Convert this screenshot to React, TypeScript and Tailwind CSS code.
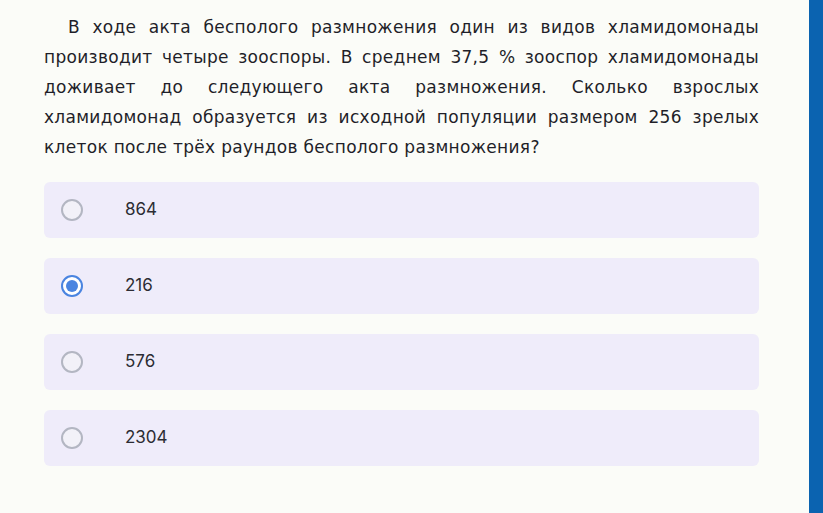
const options = [
  { id: 1, label: '864' },
  { id: 2, label: '216' },
  { id: 3, label: '576' },
  { id: 4, label: '2304' },
];

export default function App() {
  const selected = 2;
  return (
    <div className="flex h-[513px] w-[823px] bg-[#fbfcf8]">
      <div className="w-[809px] pl-[44px] pr-[50px] pt-[12px]">
        <p
          className="indent-[24px] text-justify text-[17px] leading-[30px] tracking-[0.3px] text-[#1f1f29]"
          style={{ fontFamily: '"DejaVu Sans", sans-serif' }}
        >
          В ходе акта бесполого размножения один из видов хламидомонады производит четыре зооспоры. В среднем 37,5 % зооспор хламидомонады доживает до следующего акта размножения. Сколько взрослых хламидомонад образуется из исходной популяции размером 256 зрелых клеток после трёх раундов бесполого размножения?
        </p>
        <div className="mt-[20px] flex flex-col gap-[20px]">
          {options.map((o) => (
            <div
              key={o.id}
              className="flex h-[56px] items-center rounded-[6px] bg-[#efecfa]"
            >
              <div className="ml-[17px] flex w-[22px] h-[22px] items-center justify-center">
                {selected === o.id ? (
                  <span className="flex h-[22px] w-[22px] items-center justify-center rounded-full border-2 border-[#4a84e0] bg-white">
                    <span className="h-[12px] w-[12px] rounded-full bg-[#4a84e0]" />
                  </span>
                ) : (
                  <span className="h-[22px] w-[22px] rounded-full border-2 border-[#b3b6c2] bg-[#f2f1f8]" />
                )}
              </div>
              <span
                className="ml-[42px] text-[17px] text-[#2c2c33]"
                style={{ fontFamily: 'Inter, sans-serif' }}
              >
                {o.label}
              </span>
            </div>
          ))}
        </div>
      </div>
      <div className="w-[14px] bg-[#0b63b0]" />
    </div>
  );
}
